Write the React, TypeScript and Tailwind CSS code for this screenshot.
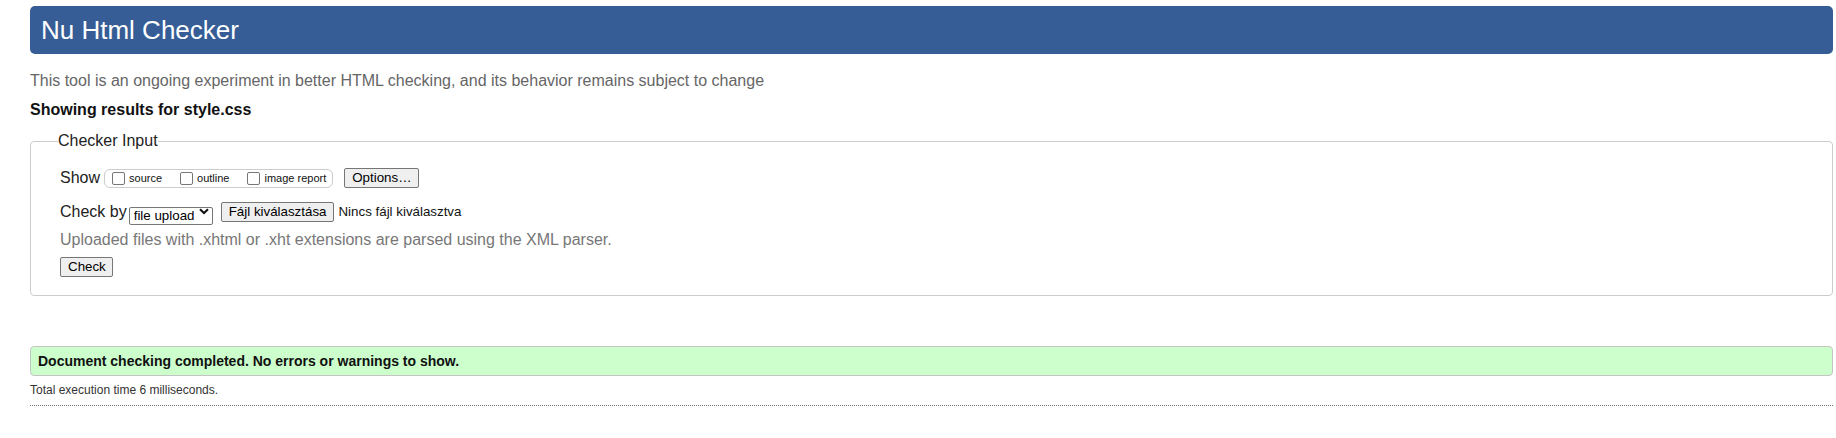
import React from "react";

const Checkbox: React.FC<{ label: string }> = ({ label }) => (
  <label className="flex items-center">
    <input
      type="checkbox"
      className="appearance-none w-[13px] h-[13px] m-0 border border-[#767676] rounded-[2px] bg-white"
    />
    <span className="ml-[4px] text-[11px] leading-[13px] text-[#111]">{label}</span>
  </label>
);

const Button: React.FC<{ children: React.ReactNode; className?: string }> = ({ children, className = "" }) => (
  <button
    className={`h-[20px] px-[7px] whitespace-nowrap border border-[#767676] rounded-[2px] bg-[#efefef] text-[13.33px] leading-[16px] text-black ${className}`}
  >
    {children}
  </button>
);

export default function App() {
  return (
    <div className="min-h-[438px] bg-white pl-[30px] pr-[3px] font-['Liberation_Sans',Arial,sans-serif]">
      {/* Title bar */}
      <div className="mt-[6px] h-[48px] rounded-[5px] bg-[#365d95] pl-[11px] pt-[9px]">
        <h1 className="text-[26px] leading-[30px] text-white font-normal">Nu Html Checker</h1>
      </div>

      <p className="mt-[18px] text-[16px] leading-[18px] text-[#666]">
        This tool is an ongoing experiment in better HTML checking, and its behavior remains subject to change
      </p>

      <p className="mt-[11px] text-[16px] leading-[18px] font-bold text-[#111]">Showing results for style.css</p>

      {/* Checker input */}
      <fieldset className="mt-[13px] border border-[#cccccc] rounded-[4px] pl-[29px] pt-[18px] pb-[18px]">
        <legend className="-ml-[2px] text-[16px] leading-[18px] text-[#222]">Checker Input</legend>

        <div className="flex items-center h-[20px]">
          <span className="text-[16px] leading-[18px] text-[#222]">Show</span>
          <div className="ml-[4px] flex items-center h-[19px] pl-[7px] pr-[6px] border border-[#cccccc] rounded-[6px] gap-[18px]">
            <Checkbox label="source" />
            <Checkbox label="outline" />
            <Checkbox label="image report" />
          </div>
          <Button className="ml-[11px] w-[75px]">Options…</Button>
        </div>

        <div className="mt-[14px] flex items-center h-[20px]">
          <span className="text-[16px] leading-[18px] text-[#222]">Check by</span>
          <div className="relative ml-[2px] h-[18px] w-[84px]">
            <select className="appearance-none w-full h-full border border-[#767676] rounded-[2px] bg-white pl-[4px] text-[13.33px] leading-[16px] text-black">
              <option>file upload</option>
            </select>
            <svg
              className="absolute right-[4px] top-[5px] pointer-events-none"
              width="10"
              height="7"
              viewBox="0 0 10 7"
            >
              <path d="M1 1.2 L5 5 L9 1.2" fill="none" stroke="#111" strokeWidth="2" />
            </svg>
          </div>
          <Button className="ml-[8px]">Fájl kiválasztása</Button>
          <span className="ml-[4px] whitespace-nowrap text-[13.33px] leading-[16px] text-[#111]">Nincs fájl kiválasztva</span>
        </div>

        <p className="mt-[9px] text-[16px] leading-[18px] text-[#777]">
          Uploaded files with .xhtml or .xht extensions are parsed using the XML parser.
        </p>

        <div className="mt-[8px] flex">
          <Button className="w-[53px]">Check</Button>
        </div>
      </fieldset>

      {/* Result */}
      <div className="mt-[50px] h-[30px] border border-[#c4c4c4] rounded-[4px] bg-[#ccffcc] pl-[7px] flex items-center">
        <span className="text-[14px] leading-[16px] font-bold text-[#111]">
          Document checking completed. No errors or warnings to show.
        </span>
      </div>

      <p className="mt-[7px] text-[12px] leading-[14px] text-[#333]">Total execution time 6 milliseconds.</p>

      <div className="mt-[8px] border-t border-dotted border-[#777]" />
    </div>
  );
}
